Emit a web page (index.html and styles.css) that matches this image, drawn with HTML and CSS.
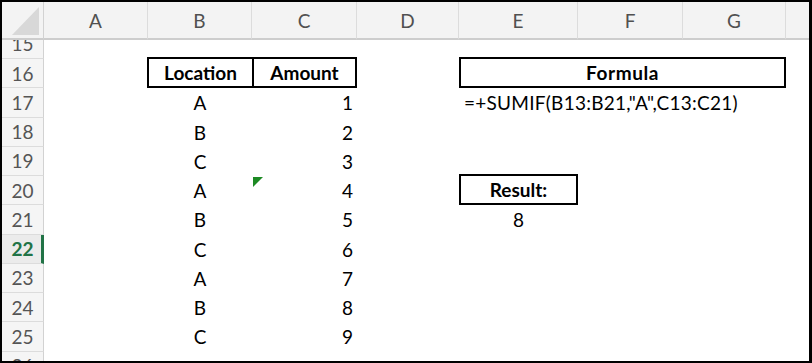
FILE: index.html
```html
<!DOCTYPE html>
<html lang="en">
<head>
<meta charset="utf-8">
<title>SUMIF example</title>
<link rel="stylesheet" href="styles.css">
</head>
<body>
<div class="frame">
  <div class="sheet">
    <div class="row head">
      <div class="corner">
        <svg class="corner-mark" width="41" height="36" viewBox="0 0 41 36"><polygon points="10,33 37,33 37,5" fill="#d8d8d8"/></svg>
      </div>
      <div class="colhead">A</div>
      <div class="colhead">B</div>
      <div class="colhead">C</div>
      <div class="colhead">D</div>
      <div class="colhead">E</div>
      <div class="colhead">F</div>
      <div class="colhead">G</div>
      <div class="colhead last"></div>
    </div>

    <div class="clip">
      <div class="row"><div class="rh">15</div></div>
    </div>

    <div class="row">
      <div class="rh">16</div>
      <div class="cell box box-open col-b">Location</div>
      <div class="cell box col-c">Amount</div>
      <div class="cell box wide col-efg">Formula</div>
    </div>
    <div class="row">
      <div class="rh">17</div>
      <div class="cell mid col-b">A</div>
      <div class="cell num col-c">1</div>
      <div class="cell formula col-efg">=+SUMIF(B13:B21,"A",C13:C21)</div>
    </div>
    <div class="row">
      <div class="rh">18</div>
      <div class="cell mid col-b">B</div>
      <div class="cell num col-c">2</div>
    </div>
    <div class="row">
      <div class="rh">19</div>
      <div class="cell mid col-b">C</div>
      <div class="cell num col-c">3</div>
    </div>
    <div class="row">
      <div class="rh">20</div>
      <div class="cell mid col-b">A</div>
      <div class="cell num col-c flagged"><span class="error-mark"></span>4</div>
      <div class="cell box col-e">Result:</div>
    </div>
    <div class="row">
      <div class="rh">21</div>
      <div class="cell mid col-b">B</div>
      <div class="cell num col-c">5</div>
      <div class="cell mid col-e">8</div>
    </div>
    <div class="row">
      <div class="rh active">22</div>
      <div class="cell mid col-b">C</div>
      <div class="cell num col-c">6</div>
    </div>
    <div class="row">
      <div class="rh">23</div>
      <div class="cell mid col-b">A</div>
      <div class="cell num col-c">7</div>
    </div>
    <div class="row">
      <div class="rh">24</div>
      <div class="cell mid col-b">B</div>
      <div class="cell num col-c">8</div>
    </div>
    <div class="row">
      <div class="rh">25</div>
      <div class="cell mid col-b">C</div>
      <div class="cell num col-c">9</div>
    </div>
    <div class="row">
      <div class="rh">26</div>
    </div>
  </div>
</div>
</body>
</html>
```
FILE: styles.css
```css
html, body {
  margin: 0;
  padding: 0;
  background: #ffffff;
}

.frame {
  width: 812px;
  height: 363px;
  box-sizing: border-box;
  border: solid #000000;
  border-width: 2px 3px 2px 2px;
  overflow: hidden;
  background: #ffffff;
  font-family: Lato, "Open Sans", "Liberation Sans", sans-serif;
  font-size: 19px;
  color: #000000;
}

.sheet {
  display: flex;
  flex-direction: column;
}

/* every sheet row shares the same column tracks */
.row {
  display: grid;
  grid-template-columns: 42px 104px 104px 105px 102px 119px 105px 103px 1fr;
  height: 29.25px;
  flex-shrink: 0;
}

.row.head {
  height: 38px;
}

/* column letters */
.corner,
.colhead {
  box-sizing: border-box;
  background: #f3f3f3;
  border-bottom: 2px solid #cdcdcd;
  border-right: 1px solid #dcdcdc;
}

.corner {
  border-right-color: #d2d2d2;
}

.corner-mark {
  display: block;
}

.colhead {
  display: flex;
  align-items: center;
  justify-content: center;
  color: #505050;
}

.colhead.last {
  border-right: none;
}

/* partially scrolled first row */
.clip {
  height: 19px;
  overflow: hidden;
  display: flex;
  flex-direction: column;
  justify-content: flex-end;
  flex-shrink: 0;
}

/* row numbers */
.rh {
  grid-column: 1;
  box-sizing: border-box;
  background: #f5f5f5;
  border-right: 1px solid #d2d2d2;
  border-bottom: 1px solid #dcdcdc;
  display: flex;
  align-items: center;
  justify-content: center;
  color: #555555;
}

.rh.active {
  background: #ebebeb;
  border-right: 3px solid #217346;
  color: #217346;
  font-weight: 700;
  padding-left: 2px;
}

/* worksheet cells */
.cell {
  box-sizing: border-box;
  display: flex;
  align-items: center;
  padding: 0 5px;
  white-space: nowrap;
  min-width: 0;
}

.col-b { grid-column: 3; }
.col-c { grid-column: 4; }
.col-e { grid-column: 6; }
.col-efg { grid-column: 6 / 9; }

.mid { justify-content: center; }
.num { justify-content: flex-end; padding-right: 4px; }
.formula {
  justify-content: flex-start;
  padding-left: 5px;
  letter-spacing: 0.25px;
}

.box {
  justify-content: center;
  font-weight: 700;
  border: 2px solid #000000;
  margin-top: -2px;
}

.box.wide {
  letter-spacing: 0.6px;
}

.box-open {
  border-right: none;
  margin-left: -1px;
}

/* green error indicator in the cell corner */
.flagged {
  position: relative;
}

.error-mark {
  position: absolute;
  left: 1px;
  top: 1px;
  width: 0;
  height: 0;
  border-top: 10px solid #1d8a24;
  border-right: 10px solid transparent;
}
```
